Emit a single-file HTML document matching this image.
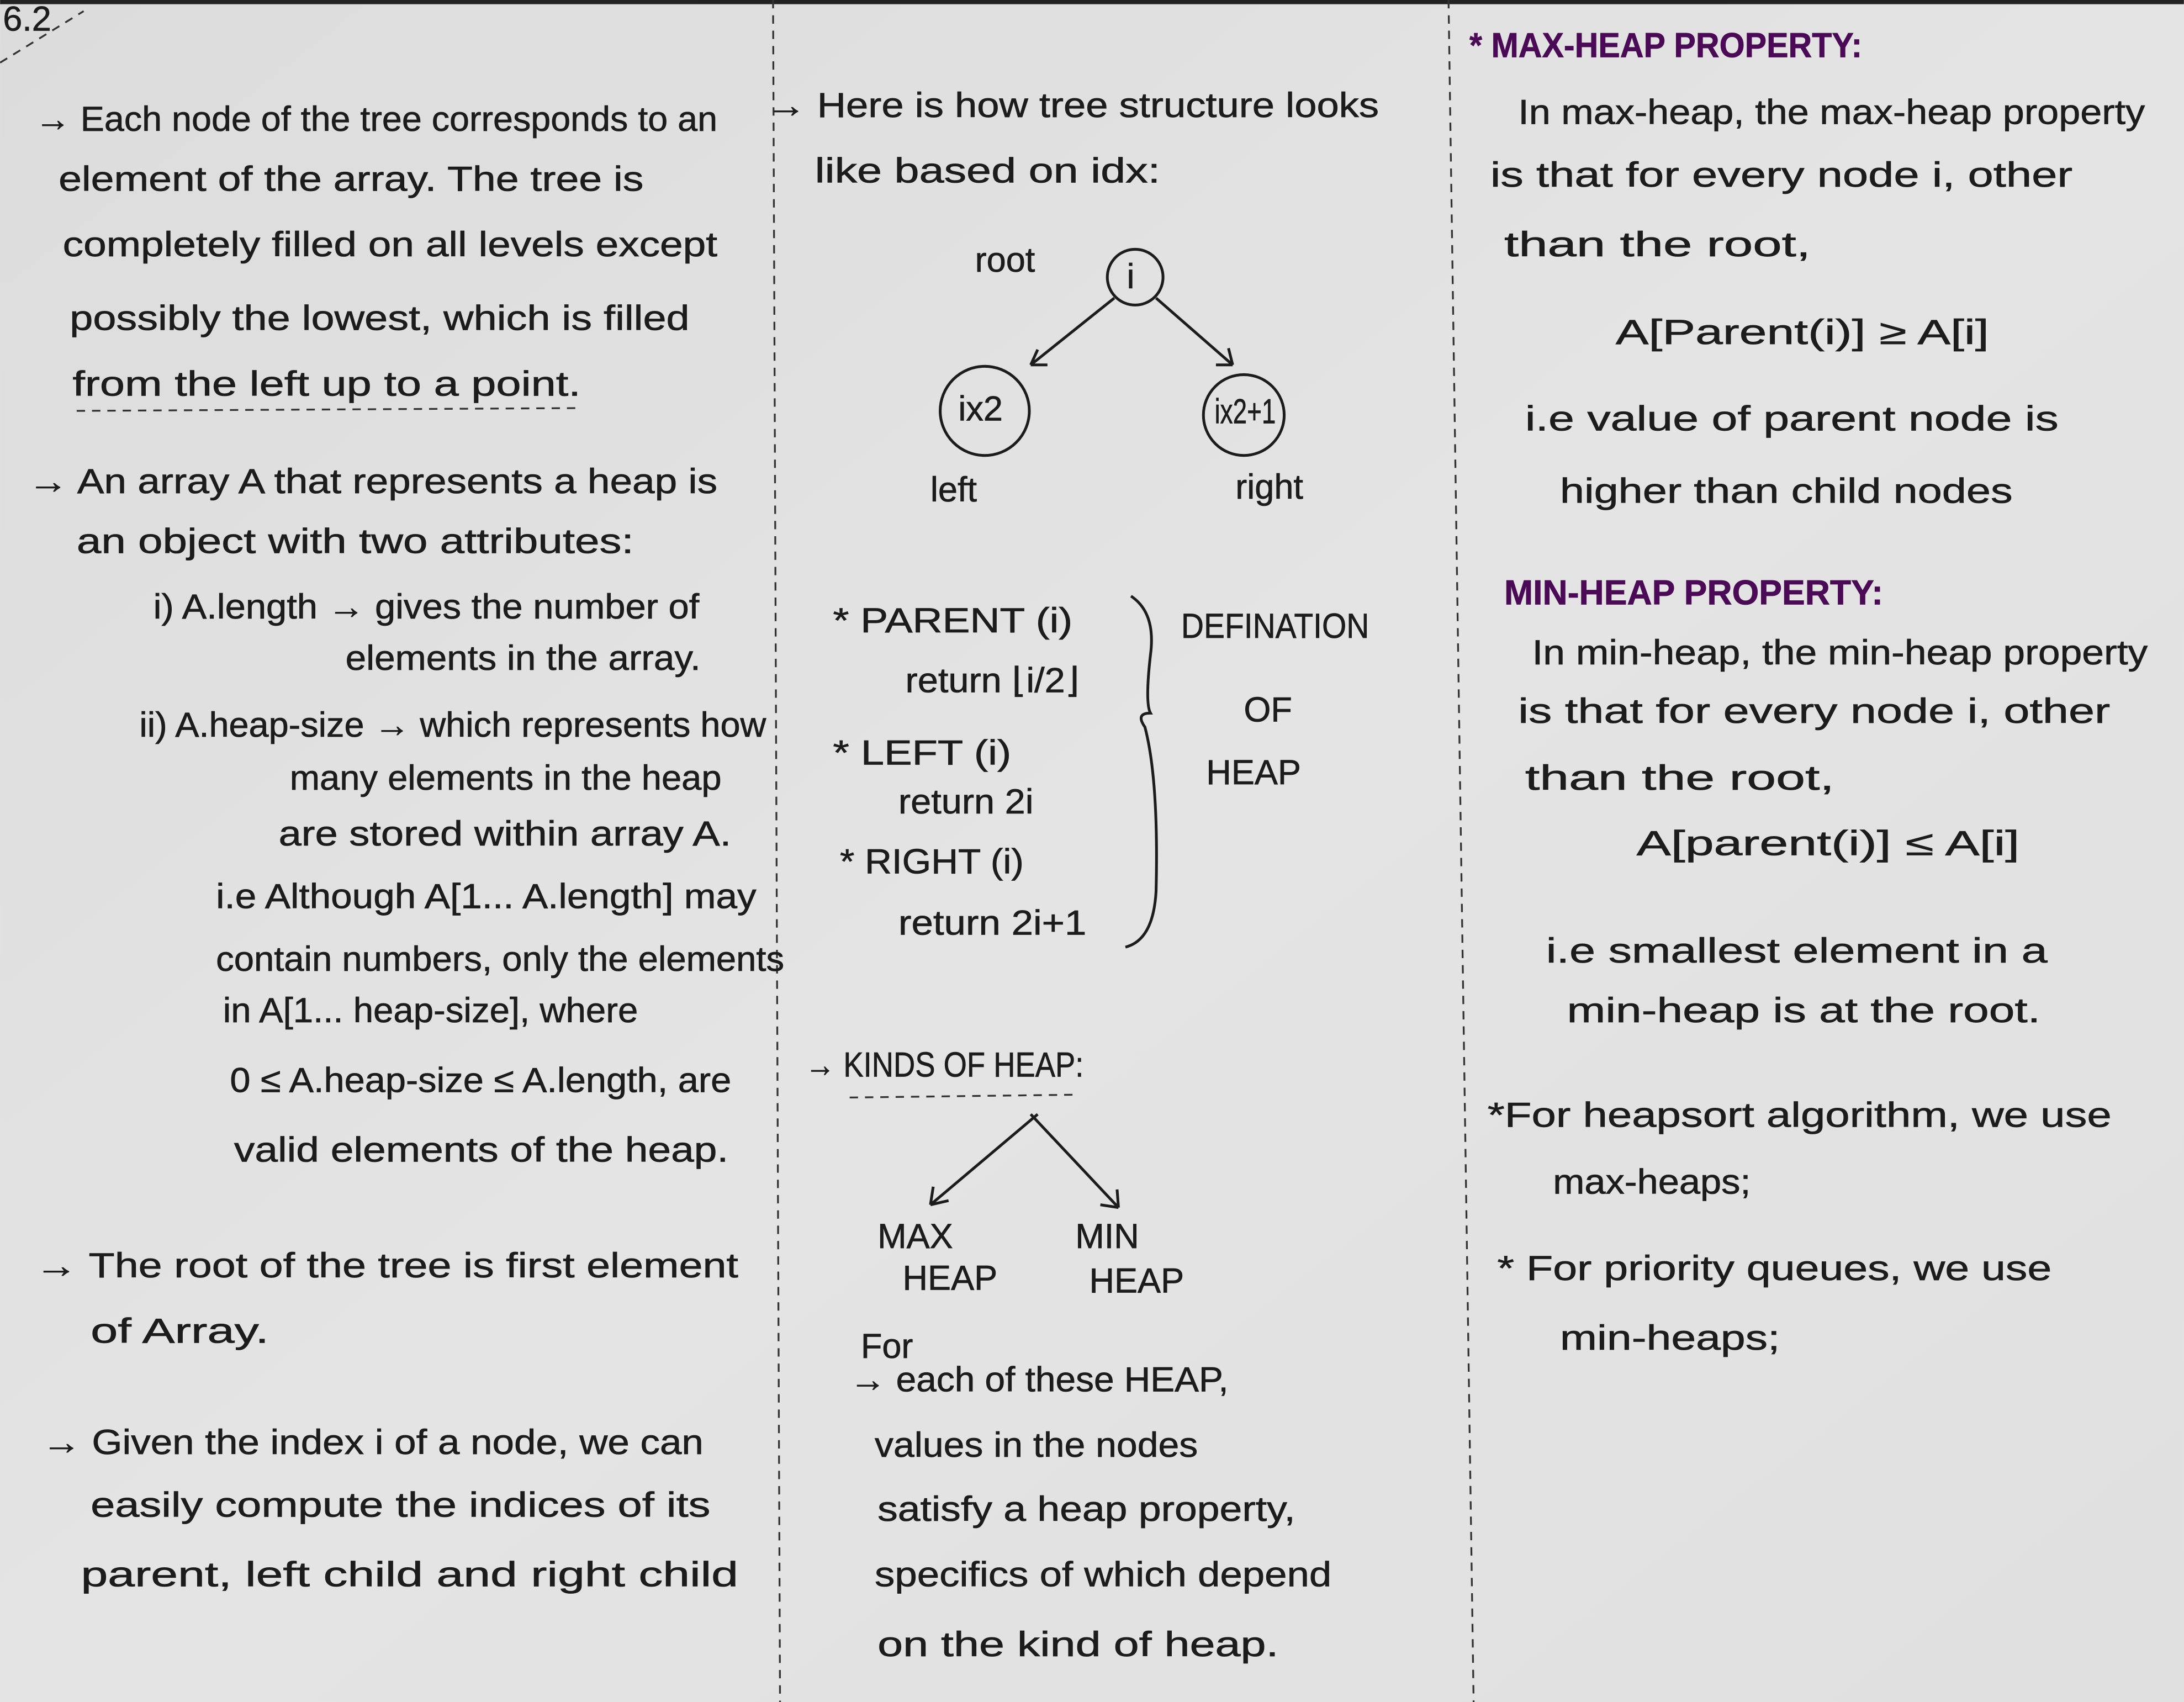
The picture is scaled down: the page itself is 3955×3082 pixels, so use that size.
<!DOCTYPE html>
<html><head><meta charset="utf-8"><style>
html,body{margin:0;padding:0;background:#e3e3e3;}
svg{display:block}
text{font-family:"Liberation Sans",sans-serif;fill:#1c1c1c;font-size:25px;stroke:#1c1c1c;stroke-width:0.3;}
.p{fill:#4a0a55;stroke:#4a0a55;font-weight:bold;}
.s{fill:none;stroke:#1c1c1c;stroke-width:2;}
.d{fill:none;stroke:#333;stroke-width:1.3;stroke-dasharray:6 5;}
</style></head><body>
<svg width="3955" height="3082" viewBox="0 0 1568 1222" xmlns="http://www.w3.org/2000/svg">
<defs><linearGradient id="g" x1="0" y1="0" x2="1" y2="1"><stop offset="0" stop-color="#dcdcdc"/><stop offset="0.5" stop-color="#e4e4e4"/><stop offset="1" stop-color="#e0e0e0"/></linearGradient></defs>
<rect width="1568" height="1222" fill="url(#g)"/>
<rect width="1568" height="3" fill="#222"/>
<line class="d" x1="555" y1="0" x2="560" y2="1222"/>
<line class="d" x1="1040" y1="0" x2="1058" y2="1222"/>
<path class="d" d="M0 45 L60 8"/>
<text x="2" y="22" font-size="20">6.2</text>

<text x="25" y="94" textLength="490" lengthAdjust="spacingAndGlyphs">→ Each node of the tree corresponds to an</text>
<text x="42" y="137" textLength="420" lengthAdjust="spacingAndGlyphs">element of the array. The tree is</text>
<text x="45" y="184" textLength="470" lengthAdjust="spacingAndGlyphs">completely filled on all levels except</text>
<text x="50" y="237" textLength="445" lengthAdjust="spacingAndGlyphs">possibly the lowest, which is filled</text>
<text x="52" y="284" textLength="365" lengthAdjust="spacingAndGlyphs">from the left up to a point.</text>
<path class="d" d="M55 295 L415 293"/>
<text x="20" y="354" textLength="495" lengthAdjust="spacingAndGlyphs">→ An array A that represents a heap is</text>
<text x="55" y="397" textLength="400" lengthAdjust="spacingAndGlyphs">an object with two attributes:</text>
<text x="110" y="444" textLength="392" lengthAdjust="spacingAndGlyphs">i) A.length → gives the number of</text>
<text x="248" y="481" textLength="255" lengthAdjust="spacingAndGlyphs">elements in the array.</text>
<text x="100" y="529" textLength="450" lengthAdjust="spacingAndGlyphs">ii) A.heap-size → which represents how</text>
<text x="208" y="567" textLength="310" lengthAdjust="spacingAndGlyphs">many elements in the heap</text>
<text x="200" y="607" textLength="325" lengthAdjust="spacingAndGlyphs">are stored within array A.</text>
<text x="155" y="652" textLength="388" lengthAdjust="spacingAndGlyphs">i.e Although A[1... A.length] may</text>
<text x="155" y="697" textLength="408" lengthAdjust="spacingAndGlyphs">contain numbers, only the elements</text>
<text x="160" y="734" textLength="298" lengthAdjust="spacingAndGlyphs">in A[1... heap-size], where</text>
<text x="165" y="784" textLength="360" lengthAdjust="spacingAndGlyphs">0 ≤ A.heap-size ≤ A.length, are</text>
<text x="168" y="834" textLength="355" lengthAdjust="spacingAndGlyphs">valid elements of the heap.</text>
<text x="25" y="917" textLength="505" lengthAdjust="spacingAndGlyphs">→ The root of the tree is first element</text>
<text x="65" y="964" textLength="128" lengthAdjust="spacingAndGlyphs">of Array.</text>
<text x="30" y="1044" textLength="475" lengthAdjust="spacingAndGlyphs">→ Given the index i of a node, we can</text>
<text x="65" y="1089" textLength="445" lengthAdjust="spacingAndGlyphs">easily compute the indices of its</text>
<text x="58" y="1139" textLength="472" lengthAdjust="spacingAndGlyphs">parent, left child and right child</text>

<text x="550" y="84" textLength="440" lengthAdjust="spacingAndGlyphs">→ Here is how tree structure looks</text>
<text x="585" y="131" textLength="248" lengthAdjust="spacingAndGlyphs">like based on idx:</text>
<text x="700" y="195" font-size="22">root</text>
<circle class="s" cx="815" cy="199" r="20"/><text x="809" y="207" font-size="22">i</text>
<path class="s" d="M800 214 L740 262 M740 262 L752 262 M740 262 L745 251"/>
<path class="s" d="M830 214 L885 262 M885 262 L873 262 M885 262 L882 250"/>
<circle class="s" cx="707" cy="295" r="32"/><text x="688" y="302" font-size="21">ix2</text>
<circle class="s" cx="893" cy="298" r="29"/><text x="872" y="304" font-size="16" textLength="44" lengthAdjust="spacingAndGlyphs">ix2+1</text>
<text x="668" y="360" font-size="22">left</text>
<text x="887" y="358" font-size="22">right</text>
<text x="598" y="454" textLength="172" lengthAdjust="spacingAndGlyphs">* PARENT (i)</text>
<text x="650" y="497" textLength="125" lengthAdjust="spacingAndGlyphs">return ⌊i/2⌋</text>
<text x="598" y="549" textLength="128" lengthAdjust="spacingAndGlyphs">* LEFT (i)</text>
<text x="645" y="584" textLength="97" lengthAdjust="spacingAndGlyphs">return 2i</text>
<text x="603" y="627" textLength="132" lengthAdjust="spacingAndGlyphs">* RIGHT (i)</text>
<text x="645" y="671" textLength="135" lengthAdjust="spacingAndGlyphs">return 2i+1</text>
<path class="s" d="M812 428 Q830 440 826 470 Q822 505 826 512 Q815 512 822 522 Q832 560 830 640 Q828 675 808 680"/>
<text x="848" y="458" font-size="21" textLength="135" lengthAdjust="spacingAndGlyphs">DEFINATION</text>
<text x="893" y="518" font-size="21">OF</text>
<text x="866" y="563" font-size="21">HEAP</text>
<text x="578" y="773" font-size="21" textLength="200" lengthAdjust="spacingAndGlyphs">→ KINDS OF HEAP:</text>
<path class="d" d="M610 788 L770 786"/>
<path class="s" d="M745 800 L668 865 M668 865 L670 852 M668 865 L681 862"/>
<path class="s" d="M740 800 L803 867 M803 867 L790 865 M803 867 L802 854"/>
<text x="630" y="896" font-size="21">MAX</text>
<text x="648" y="926" font-size="21">HEAP</text>
<text x="772" y="896" font-size="21">MIN</text>
<text x="782" y="928" font-size="21">HEAP</text>
<text x="618" y="975" font-size="15">For</text>
<text x="610" y="999" textLength="272" lengthAdjust="spacingAndGlyphs">→ each of these HEAP,</text>
<text x="628" y="1046" textLength="232" lengthAdjust="spacingAndGlyphs">values in the nodes</text>
<text x="630" y="1092" textLength="300" lengthAdjust="spacingAndGlyphs">satisfy a heap property,</text>
<text x="628" y="1139" textLength="328" lengthAdjust="spacingAndGlyphs">specifics of which depend</text>
<text x="630" y="1189" textLength="288" lengthAdjust="spacingAndGlyphs">on the kind of heap.</text>

<text x="1055" y="41" class="p" textLength="282" lengthAdjust="spacingAndGlyphs">* MAX-HEAP PROPERTY:</text>
<text x="1090" y="89" textLength="450" lengthAdjust="spacingAndGlyphs">In max-heap, the max-heap property</text>
<text x="1070" y="134" textLength="418" lengthAdjust="spacingAndGlyphs">is that for every node i, other</text>
<text x="1080" y="184" textLength="220" lengthAdjust="spacingAndGlyphs">than the root,</text>
<text x="1160" y="247" font-size="32" textLength="268" lengthAdjust="spacingAndGlyphs">A[Parent(i)] ≥ A[i]</text>
<text x="1095" y="309" textLength="383" lengthAdjust="spacingAndGlyphs">i.e value of parent node is</text>
<text x="1120" y="361" textLength="325" lengthAdjust="spacingAndGlyphs">higher than child nodes</text>
<text x="1080" y="434" class="p" textLength="272" lengthAdjust="spacingAndGlyphs">MIN-HEAP PROPERTY:</text>
<text x="1100" y="477" textLength="442" lengthAdjust="spacingAndGlyphs">In min-heap, the min-heap property</text>
<text x="1090" y="519" textLength="425" lengthAdjust="spacingAndGlyphs">is that for every node i, other</text>
<text x="1095" y="567" textLength="222" lengthAdjust="spacingAndGlyphs">than the root,</text>
<text x="1175" y="614" font-size="30" textLength="275" lengthAdjust="spacingAndGlyphs">A[parent(i)] ≤ A[i]</text>
<text x="1110" y="691" textLength="360" lengthAdjust="spacingAndGlyphs">i.e smallest element in a</text>
<text x="1125" y="734" textLength="340" lengthAdjust="spacingAndGlyphs">min-heap is at the root.</text>
<text x="1068" y="809" textLength="448" lengthAdjust="spacingAndGlyphs">*For heapsort algorithm, we use</text>
<text x="1115" y="857" textLength="142" lengthAdjust="spacingAndGlyphs">max-heaps;</text>
<text x="1075" y="919" textLength="398" lengthAdjust="spacingAndGlyphs">* For priority queues, we use</text>
<text x="1120" y="969" textLength="158" lengthAdjust="spacingAndGlyphs">min-heaps;</text>
</svg>
</body></html>
